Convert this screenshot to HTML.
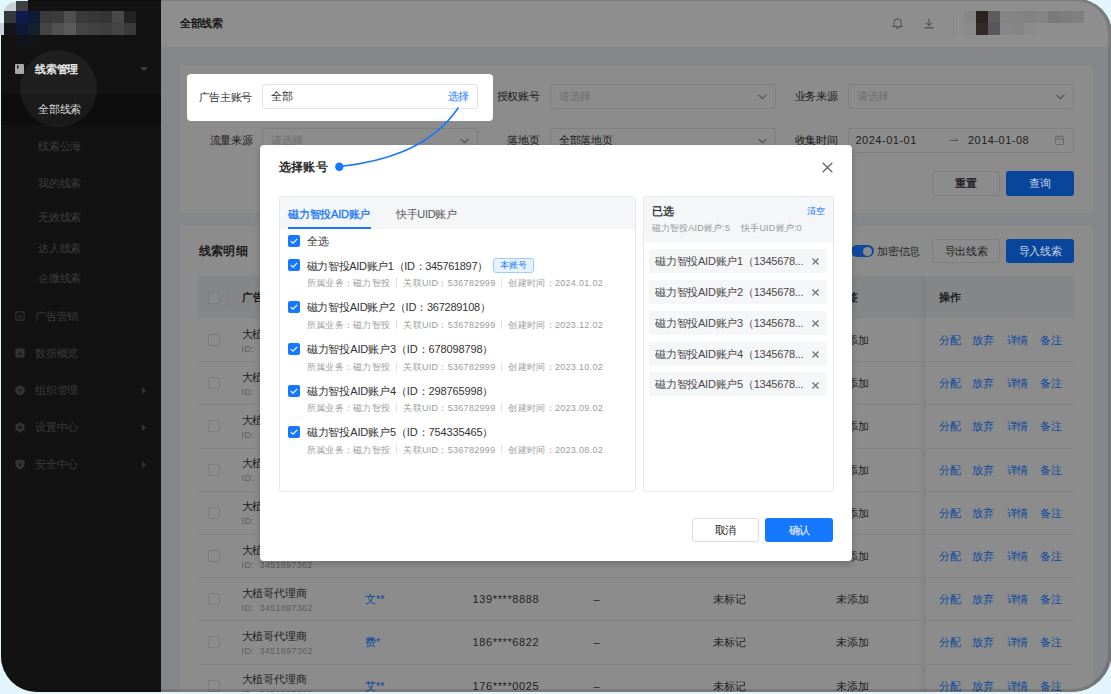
<!DOCTYPE html><html><head><meta charset="utf-8"><style>
html,body{margin:0;padding:0;width:1111px;height:694px;overflow:hidden;background:#e2f5fc;font-family:"Liberation Sans",sans-serif;}
.a{position:absolute;box-sizing:border-box}
.t{position:absolute;white-space:nowrap}
#frame{position:absolute;left:1px;top:-1px;width:1111px;height:692.5px;border-radius:36px 35px 40px 36px;overflow:hidden;background:#86878a}
#in{position:absolute;left:-1px;top:1px;width:1111px;height:694px}
#rim{position:absolute;left:1px;top:-1px;width:1111px;height:692.5px;border-radius:36px 35px 40px 36px;box-sizing:border-box;border:solid rgba(0,0,0,0.13);border-width:2px 4px 3px 1px}
svg{position:absolute;overflow:visible}
</style></head><body>
<div id="frame"><div id="in">
<div class="a" style="left:0px;top:0px;width:161px;height:700px;background:#121212"></div>
<div class="a" style="left:0px;top:94px;width:161px;height:31px;background:#0d0d0d"></div>
<div class="a" style="left:20px;top:49.5px;width:77px;height:77px;border-radius:50%;background:rgba(255,255,255,0.055)"></div>
<svg style="left:15px;top:64px" width="9" height="10" viewBox="0 0 9 10"><rect x="0" y="0" width="9" height="10" rx="1" fill="#a8a8a8"/><rect x="2" y="1.5" width="1.5" height="3" fill="#121212"/></svg>
<div class="t" style="left:35.3px;top:60.70px;font-size:11px;line-height:16px;color:#ececec;font-weight:400;letter-spacing:-0.3px;-webkit-text-stroke:0.4px #ececec;">线索管理</div>
<svg style="left:140px;top:67px" width="8" height="4" viewBox="0 0 8 4"><path d="M0 0H8L4 4Z" fill="#3a3a3a"/></svg>
<div class="t" style="left:38.4px;top:101.10px;font-size:11px;line-height:16px;color:#dcdcdc;font-weight:400;letter-spacing:-0.3px;">全部线索</div>
<div class="t" style="left:38.4px;top:137.70px;font-size:11px;line-height:16px;color:#3e3e3e;font-weight:400;letter-spacing:-0.3px;">线索公海</div>
<div class="t" style="left:38.4px;top:174.90px;font-size:11px;line-height:16px;color:#3e3e3e;font-weight:400;letter-spacing:-0.3px;">我的线索</div>
<div class="t" style="left:38.4px;top:208.70px;font-size:11px;line-height:16px;color:#3e3e3e;font-weight:400;letter-spacing:-0.3px;">无效线索</div>
<div class="t" style="left:38.4px;top:240.10px;font-size:11px;line-height:16px;color:#3e3e3e;font-weight:400;letter-spacing:-0.3px;">达人线索</div>
<div class="t" style="left:38.4px;top:270.00px;font-size:11px;line-height:16px;color:#3e3e3e;font-weight:400;letter-spacing:-0.3px;">企微线索</div>
<svg style="left:14.5px;top:310.9px" width="10" height="11" viewBox="0 0 10 11"><rect x="0.9" y="0.9" width="8.2" height="8.2" rx="1.2" fill="none" stroke="#333" stroke-width="1.1"/><path d="M3.4 7V5M5 7V3.5M6.6 7V5.5" stroke="#333" stroke-width="1"/></svg>
<div class="t" style="left:35.3px;top:307.80px;font-size:11px;line-height:16px;color:#3a3a3a;font-weight:400;letter-spacing:-0.3px;">广告营销</div>
<svg style="left:14.5px;top:348.0px" width="10" height="11" viewBox="0 0 10 11"><rect x="0.4" y="0.4" width="9.2" height="9.2" rx="1.2" fill="#333"/><path d="M3.4 7.2V5M5 7.2V3.5M6.6 7.2V5.5" stroke="#121212" stroke-width="1"/></svg>
<div class="t" style="left:35.3px;top:344.90px;font-size:11px;line-height:16px;color:#3a3a3a;font-weight:400;letter-spacing:-0.3px;">数据概览</div>
<svg style="left:14.5px;top:384.8px" width="10" height="11" viewBox="0 0 10 11"><path d="M5 0L9.6 2.6V7.9L5 10.5L0.4 7.9V2.6Z" fill="#333"/><path d="M3.2 3.6L5 5.3L6.8 3.6M5 5.3V7.6" stroke="#121212" stroke-width="1" fill="none"/></svg>
<div class="t" style="left:35.3px;top:381.70px;font-size:11px;line-height:16px;color:#3a3a3a;font-weight:400;letter-spacing:-0.3px;">组织管理</div>
<svg style="left:142px;top:386.5px" width="4" height="7" viewBox="0 0 4 7"><path d="M0 0L4 3.5L0 7Z" fill="#333"/></svg>
<svg style="left:14.5px;top:421.9px" width="10" height="11" viewBox="0 0 10 11"><circle cx="8.12" cy="7.10" r="1.7" fill="#333"/><circle cx="5.00" cy="8.90" r="1.7" fill="#333"/><circle cx="1.88" cy="7.10" r="1.7" fill="#333"/><circle cx="1.88" cy="3.50" r="1.7" fill="#333"/><circle cx="5.00" cy="1.70" r="1.7" fill="#333"/><circle cx="8.12" cy="3.50" r="1.7" fill="#333"/><circle cx="5" cy="5.3" r="3.8" fill="#333"/><circle cx="5" cy="5.3" r="1.6" fill="#121212"/></svg>
<div class="t" style="left:35.3px;top:418.80px;font-size:11px;line-height:16px;color:#3a3a3a;font-weight:400;letter-spacing:-0.3px;">设置中心</div>
<svg style="left:142px;top:423.6px" width="4" height="7" viewBox="0 0 4 7"><path d="M0 0L4 3.5L0 7Z" fill="#333"/></svg>
<svg style="left:14.5px;top:458.8px" width="10" height="11" viewBox="0 0 10 11"><path d="M5 0.3L9.6 1.8V5.6C9.6 8 7.2 9.6 5 10.6C2.8 9.6 0.4 8 0.4 5.6V1.8Z" fill="#333"/><path d="M5.5 3L4 5.6H6L4.7 7.8" stroke="#121212" stroke-width="0.8" fill="none"/></svg>
<div class="t" style="left:35.3px;top:455.70px;font-size:11px;line-height:16px;color:#3a3a3a;font-weight:400;letter-spacing:-0.3px;">安全中心</div>
<svg style="left:142px;top:460.5px" width="4" height="7" viewBox="0 0 4 7"><path d="M0 0L4 3.5L0 7Z" fill="#333"/></svg>
<div class="a" style="left:161px;top:0px;width:950px;height:47px;background:#8e8e8e"></div>
<div class="t" style="left:180.1px;top:14.70px;font-size:11px;line-height:16px;color:#141414;font-weight:400;letter-spacing:-0.3px;-webkit-text-stroke:0.4px #141414;">全部线索</div>
<svg style="left:892px;top:17px" width="11" height="12" viewBox="0 0 11 12"><path d="M2 8.5V5.5C2 3.3 3.5 2 5.5 2S9 3.3 9 5.5V8.5L10.2 9.6H0.8Z" fill="none" stroke="#555" stroke-width="1.1" stroke-linejoin="round"/><path d="M4.3 10.3A1.2 1.2 0 0 0 6.7 10.3" fill="none" stroke="#555" stroke-width="1.1"/><path d="M5.5 0.8V2" stroke="#555" stroke-width="1.1"/></svg>
<svg style="left:923.5px;top:17.5px" width="10" height="11" viewBox="0 0 10 11"><path d="M5 0.5V7.5M2 4.7L5 7.6L8 4.7" fill="none" stroke="#555" stroke-width="1.1"/><path d="M0.5 9.8H9.5" stroke="#555" stroke-width="1.4"/></svg>
<div class="a" style="left:953px;top:10px;width:1px;height:25px;background:#868686"></div>
<div class="a" style="left:964px;top:11px;width:12px;height:12px;background:#878787"></div>
<div class="a" style="left:976px;top:11px;width:12px;height:12px;background:#2a2220"></div>
<div class="a" style="left:988px;top:11px;width:12px;height:12px;background:#5e5d5b"></div>
<div class="a" style="left:1000px;top:11px;width:12px;height:12px;background:#848484"></div>
<div class="a" style="left:1012px;top:11px;width:12px;height:12px;background:#838383"></div>
<div class="a" style="left:1024px;top:11px;width:12px;height:12px;background:#828282"></div>
<div class="a" style="left:1036px;top:11px;width:12px;height:12px;background:#848484"></div>
<div class="a" style="left:1048px;top:11px;width:12px;height:12px;background:#7a7a7a"></div>
<div class="a" style="left:1060px;top:11px;width:12px;height:12px;background:#7d7d7d"></div>
<div class="a" style="left:1072px;top:11px;width:12px;height:12px;background:#7f7f7f"></div>
<div class="a" style="left:964px;top:23px;width:12px;height:12px;background:#8a8a8a"></div>
<div class="a" style="left:976px;top:23px;width:12px;height:12px;background:#332a28"></div>
<div class="a" style="left:988px;top:23px;width:12px;height:12px;background:#58585c"></div>
<div class="a" style="left:1000px;top:23px;width:12px;height:12px;background:#878787"></div>
<div class="a" style="left:1012px;top:23px;width:12px;height:12px;background:#858585"></div>
<div class="a" style="left:1024px;top:23px;width:12px;height:12px;background:#8b8b8b"></div>
<div class="a" style="left:180px;top:66px;width:913px;height:147px;background:#8c8c8c;border-radius:3px"></div>
<div class="t" style="right:571.5px;top:88.20px;font-size:11px;line-height:16px;color:#1a1a1a;font-weight:400;letter-spacing:-0.3px;">授权账号</div>
<div class="a" style="left:550px;top:84px;width:226px;height:24.5px;border:1px solid #7e7f81;border-radius:3px"></div>
<div class="t" style="left:559px;top:88.00px;font-size:11px;line-height:16px;color:#6e6e6e;font-weight:400;letter-spacing:-0.3px;">请选择</div>
<svg style="left:758.0px;top:93.5px" width="9" height="5.5" viewBox="0 0 9 5.5"><path d="M0.6 0.8L4.5 4.6L8.4 0.8" fill="none" stroke="#505050" stroke-width="1.15"/></svg>
<div class="t" style="right:273.5px;top:88.20px;font-size:11px;line-height:16px;color:#1a1a1a;font-weight:400;letter-spacing:-0.3px;">业务来源</div>
<div class="a" style="left:848px;top:84px;width:226px;height:24.5px;border:1px solid #7e7f81;border-radius:3px"></div>
<div class="t" style="left:857px;top:88.00px;font-size:11px;line-height:16px;color:#6e6e6e;font-weight:400;letter-spacing:-0.3px;">请选择</div>
<svg style="left:1056.0px;top:93.5px" width="9" height="5.5" viewBox="0 0 9 5.5"><path d="M0.6 0.8L4.5 4.6L8.4 0.8" fill="none" stroke="#505050" stroke-width="1.15"/></svg>
<div class="t" style="right:858.7px;top:131.70px;font-size:11px;line-height:16px;color:#1a1a1a;font-weight:400;letter-spacing:-0.3px;">流量来源</div>
<div class="a" style="left:262px;top:128px;width:216px;height:24.5px;border:1px solid #7e7f81;border-radius:3px"></div>
<div class="t" style="left:271px;top:132.00px;font-size:11px;line-height:16px;color:#6e6e6e;font-weight:400;letter-spacing:-0.3px;">请选择</div>
<svg style="left:460.0px;top:137.5px" width="9" height="5.5" viewBox="0 0 9 5.5"><path d="M0.6 0.8L4.5 4.6L8.4 0.8" fill="none" stroke="#505050" stroke-width="1.15"/></svg>
<div class="t" style="right:571.5px;top:131.70px;font-size:11px;line-height:16px;color:#1a1a1a;font-weight:400;letter-spacing:-0.3px;">落地页</div>
<div class="a" style="left:550px;top:128px;width:226px;height:24.5px;border:1px solid #7e7f81;border-radius:3px"></div>
<div class="t" style="left:559px;top:132.00px;font-size:11px;line-height:16px;color:#1e1e1e;font-weight:400;letter-spacing:-0.3px;">全部落地页</div>
<svg style="left:758.0px;top:137.5px" width="9" height="5.5" viewBox="0 0 9 5.5"><path d="M0.6 0.8L4.5 4.6L8.4 0.8" fill="none" stroke="#505050" stroke-width="1.15"/></svg>
<div class="t" style="right:273.5px;top:131.70px;font-size:11px;line-height:16px;color:#1a1a1a;font-weight:400;letter-spacing:-0.3px;">收集时间</div>
<div class="a" style="left:848px;top:128px;width:226px;height:24.5px;border:1px solid #7e7f81;border-radius:3px"></div>
<div class="t" style="left:855.5px;top:132.00px;font-size:11px;line-height:16px;color:#1e1e1e;font-weight:400;letter-spacing:0.5px;">2024-01-01</div>
<div class="t" style="left:967.9px;top:132.00px;font-size:11px;line-height:16px;color:#1e1e1e;font-weight:400;letter-spacing:0.5px;">2014-01-08</div>
<svg style="left:950px;top:138px" width="9" height="4" viewBox="0 0 9 4"><path d="M0 2.5H8M5.5 0.5L8 2.5" fill="none" stroke="#555" stroke-width="1"/></svg>
<svg style="left:1055px;top:135px" width="9" height="10" viewBox="0 0 9 10"><rect x="0.5" y="1.5" width="8" height="8" rx="1" fill="none" stroke="#666" stroke-width="0.9"/><path d="M0.5 4H8.5M2.7 0V2.5M6.3 0V2.5" stroke="#666" stroke-width="0.9"/></svg>
<div class="a" style="left:932px;top:171px;width:68px;height:24.5px;border:1px solid #7e7f81;border-radius:3px"></div>
<div class="t" style="left:966px;top:174.90px;font-size:11px;line-height:16px;color:#1a1a1a;font-weight:400;letter-spacing:-0.3px;-webkit-text-stroke:0.3px #1a1a1a;transform:translateX(-50%)">重置</div>
<div class="a" style="left:1006px;top:171px;width:68px;height:24.5px;background:#08459b;border-radius:3px"></div>
<div class="t" style="left:1040px;top:174.90px;font-size:11px;line-height:16px;color:#c8d4e4;font-weight:400;letter-spacing:-0.3px;transform:translateX(-50%)">查询</div>
<div class="a" style="left:180px;top:226px;width:913px;height:480px;background:#8c8c8c;border-radius:3px"></div>
<div class="t" style="left:198.9px;top:242.70px;font-size:12px;line-height:16px;color:#141414;font-weight:400;letter-spacing:0.3px;-webkit-text-stroke:0.4px #141414;">线索明细</div>
<div class="a" style="left:851px;top:245px;width:22.5px;height:12px;background:#0b4a9e;border-radius:6px"></div>
<div class="a" style="left:863px;top:246.5px;width:9px;height:9px;border-radius:50%;background:#8c8c8c"></div>
<div class="t" style="left:877.4px;top:242.70px;font-size:11px;line-height:16px;color:#2a2a2a;font-weight:400;letter-spacing:-0.3px;">加密信息</div>
<div class="a" style="left:932px;top:239px;width:68px;height:24px;border:1px solid #7e7f81;border-radius:3px"></div>
<div class="t" style="left:966px;top:242.70px;font-size:11px;line-height:16px;color:#222;font-weight:400;letter-spacing:-0.3px;transform:translateX(-50%)">导出线索</div>
<div class="a" style="left:1006px;top:239px;width:68px;height:24px;background:#08459b;border-radius:3px"></div>
<div class="t" style="left:1040px;top:242.70px;font-size:11px;line-height:16px;color:#c8d4e4;font-weight:400;letter-spacing:-0.3px;transform:translateX(-50%)">导入线索</div>
<div class="a" style="left:198px;top:276px;width:876px;height:42px;background:#858688"></div>
<div class="a" style="left:228px;top:287px;width:1px;height:20px;background:#7d7e80"></div>
<div class="a" style="left:208px;top:291.5px;width:12px;height:12px;border:1px solid #7b7c7e;border-radius:2px;background:#8a8a8a"></div>
<div class="t" style="left:241.9px;top:289.20px;font-size:11px;line-height:16px;color:#111;font-weight:400;letter-spacing:-0.3px;-webkit-text-stroke:0.3px #111;">广告主</div>
<div class="t" style="left:836.3px;top:289.20px;font-size:11px;line-height:16px;color:#111;font-weight:400;letter-spacing:-0.3px;-webkit-text-stroke:0.3px #111;">标签</div>
<div class="t" style="left:939px;top:289.20px;font-size:11px;line-height:16px;color:#111;font-weight:400;letter-spacing:-0.3px;-webkit-text-stroke:0.3px #111;">操作</div>
<div class="a" style="left:918px;top:276px;width:7px;height:430px;background:linear-gradient(to right,rgba(0,0,0,0),rgba(0,0,0,0.05))"></div>
<div class="a" style="left:925px;top:276px;width:1px;height:430px;background:#818283"></div>
<div class="a" style="left:198px;top:361px;width:876px;height:1px;background:#828385"></div>
<div class="a" style="left:208px;top:334.0px;width:12px;height:12px;border:1px solid #7b7c7e;border-radius:2px"></div>
<div class="t" style="left:241.6px;top:325.50px;font-size:11px;line-height:16px;color:#1e1e1e;font-weight:400;letter-spacing:-0.16px;">大植哥代理商</div>
<div class="t" style="left:241.6px;top:340.50px;font-size:9px;line-height:16px;color:#5e5e5e;font-weight:400;letter-spacing:0.3px;">ID:<span style="display:inline-block;width:5.5px"></span>3451897362</div>
<div class="t" style="left:365px;top:332.00px;font-size:11px;line-height:16px;color:#0b4a9e;font-weight:400;letter-spacing:0px;">文**</div>
<div class="t" style="left:472.6px;top:332.00px;font-size:11px;line-height:16px;color:#1e1e1e;font-weight:400;letter-spacing:0.6px;">139****8888</div>
<div class="t" style="left:593.5px;top:332.00px;font-size:11px;line-height:16px;color:#1e1e1e;font-weight:400;letter-spacing:0px;">–</div>
<div class="t" style="left:713.2px;top:332.00px;font-size:11px;line-height:16px;color:#1e1e1e;font-weight:400;letter-spacing:-0.3px;">未标记</div>
<div class="t" style="left:836.3px;top:332.00px;font-size:11px;line-height:16px;color:#1e1e1e;font-weight:400;letter-spacing:-0.3px;">未添加</div>
<div class="t" style="left:938.9px;top:332.00px;font-size:11px;line-height:16px;color:#0b4a9e;font-weight:400;letter-spacing:-0.3px;">分配</div>
<div class="t" style="left:972.2px;top:332.00px;font-size:11px;line-height:16px;color:#0b4a9e;font-weight:400;letter-spacing:-0.3px;">放弃</div>
<div class="t" style="left:1006.7px;top:332.00px;font-size:11px;line-height:16px;color:#0b4a9e;font-weight:400;letter-spacing:-0.3px;">详情</div>
<div class="t" style="left:1040.4px;top:332.00px;font-size:11px;line-height:16px;color:#0b4a9e;font-weight:400;letter-spacing:-0.3px;">备注</div>
<div class="a" style="left:198px;top:404px;width:876px;height:1px;background:#828385"></div>
<div class="a" style="left:208px;top:377.2px;width:12px;height:12px;border:1px solid #7b7c7e;border-radius:2px"></div>
<div class="t" style="left:241.6px;top:368.70px;font-size:11px;line-height:16px;color:#1e1e1e;font-weight:400;letter-spacing:-0.16px;">大植哥代理商</div>
<div class="t" style="left:241.6px;top:383.70px;font-size:9px;line-height:16px;color:#5e5e5e;font-weight:400;letter-spacing:0.3px;">ID:<span style="display:inline-block;width:5.5px"></span>3451897362</div>
<div class="t" style="left:365px;top:375.20px;font-size:11px;line-height:16px;color:#0b4a9e;font-weight:400;letter-spacing:0px;">文**</div>
<div class="t" style="left:472.6px;top:375.20px;font-size:11px;line-height:16px;color:#1e1e1e;font-weight:400;letter-spacing:0.6px;">186****6822</div>
<div class="t" style="left:593.5px;top:375.20px;font-size:11px;line-height:16px;color:#1e1e1e;font-weight:400;letter-spacing:0px;">–</div>
<div class="t" style="left:713.2px;top:375.20px;font-size:11px;line-height:16px;color:#1e1e1e;font-weight:400;letter-spacing:-0.3px;">未标记</div>
<div class="t" style="left:836.3px;top:375.20px;font-size:11px;line-height:16px;color:#1e1e1e;font-weight:400;letter-spacing:-0.3px;">未添加</div>
<div class="t" style="left:938.9px;top:375.20px;font-size:11px;line-height:16px;color:#0b4a9e;font-weight:400;letter-spacing:-0.3px;">分配</div>
<div class="t" style="left:972.2px;top:375.20px;font-size:11px;line-height:16px;color:#0b4a9e;font-weight:400;letter-spacing:-0.3px;">放弃</div>
<div class="t" style="left:1006.7px;top:375.20px;font-size:11px;line-height:16px;color:#0b4a9e;font-weight:400;letter-spacing:-0.3px;">详情</div>
<div class="t" style="left:1040.4px;top:375.20px;font-size:11px;line-height:16px;color:#0b4a9e;font-weight:400;letter-spacing:-0.3px;">备注</div>
<div class="a" style="left:198px;top:448px;width:876px;height:1px;background:#828385"></div>
<div class="a" style="left:208px;top:420.4px;width:12px;height:12px;border:1px solid #7b7c7e;border-radius:2px"></div>
<div class="t" style="left:241.6px;top:411.90px;font-size:11px;line-height:16px;color:#1e1e1e;font-weight:400;letter-spacing:-0.16px;">大植哥代理商</div>
<div class="t" style="left:241.6px;top:426.90px;font-size:9px;line-height:16px;color:#5e5e5e;font-weight:400;letter-spacing:0.3px;">ID:<span style="display:inline-block;width:5.5px"></span>3451897362</div>
<div class="t" style="left:365px;top:418.40px;font-size:11px;line-height:16px;color:#0b4a9e;font-weight:400;letter-spacing:0px;">费*</div>
<div class="t" style="left:472.6px;top:418.40px;font-size:11px;line-height:16px;color:#1e1e1e;font-weight:400;letter-spacing:0.6px;">176****0025</div>
<div class="t" style="left:593.5px;top:418.40px;font-size:11px;line-height:16px;color:#1e1e1e;font-weight:400;letter-spacing:0px;">–</div>
<div class="t" style="left:713.2px;top:418.40px;font-size:11px;line-height:16px;color:#1e1e1e;font-weight:400;letter-spacing:-0.3px;">未标记</div>
<div class="t" style="left:836.3px;top:418.40px;font-size:11px;line-height:16px;color:#1e1e1e;font-weight:400;letter-spacing:-0.3px;">未添加</div>
<div class="t" style="left:938.9px;top:418.40px;font-size:11px;line-height:16px;color:#0b4a9e;font-weight:400;letter-spacing:-0.3px;">分配</div>
<div class="t" style="left:972.2px;top:418.40px;font-size:11px;line-height:16px;color:#0b4a9e;font-weight:400;letter-spacing:-0.3px;">放弃</div>
<div class="t" style="left:1006.7px;top:418.40px;font-size:11px;line-height:16px;color:#0b4a9e;font-weight:400;letter-spacing:-0.3px;">详情</div>
<div class="t" style="left:1040.4px;top:418.40px;font-size:11px;line-height:16px;color:#0b4a9e;font-weight:400;letter-spacing:-0.3px;">备注</div>
<div class="a" style="left:198px;top:491px;width:876px;height:1px;background:#828385"></div>
<div class="a" style="left:208px;top:463.6px;width:12px;height:12px;border:1px solid #7b7c7e;border-radius:2px"></div>
<div class="t" style="left:241.6px;top:455.10px;font-size:11px;line-height:16px;color:#1e1e1e;font-weight:400;letter-spacing:-0.16px;">大植哥代理商</div>
<div class="t" style="left:241.6px;top:470.10px;font-size:9px;line-height:16px;color:#5e5e5e;font-weight:400;letter-spacing:0.3px;">ID:<span style="display:inline-block;width:5.5px"></span>3451897362</div>
<div class="t" style="left:365px;top:461.60px;font-size:11px;line-height:16px;color:#0b4a9e;font-weight:400;letter-spacing:0px;">艾**</div>
<div class="t" style="left:472.6px;top:461.60px;font-size:11px;line-height:16px;color:#1e1e1e;font-weight:400;letter-spacing:0.6px;">139****8888</div>
<div class="t" style="left:593.5px;top:461.60px;font-size:11px;line-height:16px;color:#1e1e1e;font-weight:400;letter-spacing:0px;">–</div>
<div class="t" style="left:713.2px;top:461.60px;font-size:11px;line-height:16px;color:#1e1e1e;font-weight:400;letter-spacing:-0.3px;">未标记</div>
<div class="t" style="left:836.3px;top:461.60px;font-size:11px;line-height:16px;color:#1e1e1e;font-weight:400;letter-spacing:-0.3px;">未添加</div>
<div class="t" style="left:938.9px;top:461.60px;font-size:11px;line-height:16px;color:#0b4a9e;font-weight:400;letter-spacing:-0.3px;">分配</div>
<div class="t" style="left:972.2px;top:461.60px;font-size:11px;line-height:16px;color:#0b4a9e;font-weight:400;letter-spacing:-0.3px;">放弃</div>
<div class="t" style="left:1006.7px;top:461.60px;font-size:11px;line-height:16px;color:#0b4a9e;font-weight:400;letter-spacing:-0.3px;">详情</div>
<div class="t" style="left:1040.4px;top:461.60px;font-size:11px;line-height:16px;color:#0b4a9e;font-weight:400;letter-spacing:-0.3px;">备注</div>
<div class="a" style="left:198px;top:534px;width:876px;height:1px;background:#828385"></div>
<div class="a" style="left:208px;top:506.8px;width:12px;height:12px;border:1px solid #7b7c7e;border-radius:2px"></div>
<div class="t" style="left:241.6px;top:498.30px;font-size:11px;line-height:16px;color:#1e1e1e;font-weight:400;letter-spacing:-0.16px;">大植哥代理商</div>
<div class="t" style="left:241.6px;top:513.30px;font-size:9px;line-height:16px;color:#5e5e5e;font-weight:400;letter-spacing:0.3px;">ID:<span style="display:inline-block;width:5.5px"></span>3451897362</div>
<div class="t" style="left:365px;top:504.80px;font-size:11px;line-height:16px;color:#0b4a9e;font-weight:400;letter-spacing:0px;">文**</div>
<div class="t" style="left:472.6px;top:504.80px;font-size:11px;line-height:16px;color:#1e1e1e;font-weight:400;letter-spacing:0.6px;">186****6822</div>
<div class="t" style="left:593.5px;top:504.80px;font-size:11px;line-height:16px;color:#1e1e1e;font-weight:400;letter-spacing:0px;">–</div>
<div class="t" style="left:713.2px;top:504.80px;font-size:11px;line-height:16px;color:#1e1e1e;font-weight:400;letter-spacing:-0.3px;">未标记</div>
<div class="t" style="left:836.3px;top:504.80px;font-size:11px;line-height:16px;color:#1e1e1e;font-weight:400;letter-spacing:-0.3px;">未添加</div>
<div class="t" style="left:938.9px;top:504.80px;font-size:11px;line-height:16px;color:#0b4a9e;font-weight:400;letter-spacing:-0.3px;">分配</div>
<div class="t" style="left:972.2px;top:504.80px;font-size:11px;line-height:16px;color:#0b4a9e;font-weight:400;letter-spacing:-0.3px;">放弃</div>
<div class="t" style="left:1006.7px;top:504.80px;font-size:11px;line-height:16px;color:#0b4a9e;font-weight:400;letter-spacing:-0.3px;">详情</div>
<div class="t" style="left:1040.4px;top:504.80px;font-size:11px;line-height:16px;color:#0b4a9e;font-weight:400;letter-spacing:-0.3px;">备注</div>
<div class="a" style="left:198px;top:577px;width:876px;height:1px;background:#828385"></div>
<div class="a" style="left:208px;top:550.0px;width:12px;height:12px;border:1px solid #7b7c7e;border-radius:2px"></div>
<div class="t" style="left:241.6px;top:541.50px;font-size:11px;line-height:16px;color:#1e1e1e;font-weight:400;letter-spacing:-0.16px;">大植哥代理商</div>
<div class="t" style="left:241.6px;top:556.50px;font-size:9px;line-height:16px;color:#5e5e5e;font-weight:400;letter-spacing:0.3px;">ID:<span style="display:inline-block;width:5.5px"></span>3451897362</div>
<div class="t" style="left:836.3px;top:548.00px;font-size:11px;line-height:16px;color:#1e1e1e;font-weight:400;letter-spacing:-0.3px;">未添加</div>
<div class="t" style="left:938.9px;top:548.00px;font-size:11px;line-height:16px;color:#0b4a9e;font-weight:400;letter-spacing:-0.3px;">分配</div>
<div class="t" style="left:972.2px;top:548.00px;font-size:11px;line-height:16px;color:#0b4a9e;font-weight:400;letter-spacing:-0.3px;">放弃</div>
<div class="t" style="left:1006.7px;top:548.00px;font-size:11px;line-height:16px;color:#0b4a9e;font-weight:400;letter-spacing:-0.3px;">详情</div>
<div class="t" style="left:1040.4px;top:548.00px;font-size:11px;line-height:16px;color:#0b4a9e;font-weight:400;letter-spacing:-0.3px;">备注</div>
<div class="a" style="left:198px;top:620px;width:876px;height:1px;background:#828385"></div>
<div class="a" style="left:208px;top:593.2px;width:12px;height:12px;border:1px solid #7b7c7e;border-radius:2px"></div>
<div class="t" style="left:241.6px;top:584.70px;font-size:11px;line-height:16px;color:#1e1e1e;font-weight:400;letter-spacing:-0.16px;">大植哥代理商</div>
<div class="t" style="left:241.6px;top:599.70px;font-size:9px;line-height:16px;color:#5e5e5e;font-weight:400;letter-spacing:0.3px;">ID:<span style="display:inline-block;width:5.5px"></span>3451897362</div>
<div class="t" style="left:365px;top:591.20px;font-size:11px;line-height:16px;color:#0b4a9e;font-weight:400;letter-spacing:0px;">文**</div>
<div class="t" style="left:472.6px;top:591.20px;font-size:11px;line-height:16px;color:#1e1e1e;font-weight:400;letter-spacing:0.6px;">139****8888</div>
<div class="t" style="left:593.5px;top:591.20px;font-size:11px;line-height:16px;color:#1e1e1e;font-weight:400;letter-spacing:0px;">–</div>
<div class="t" style="left:713.2px;top:591.20px;font-size:11px;line-height:16px;color:#1e1e1e;font-weight:400;letter-spacing:-0.3px;">未标记</div>
<div class="t" style="left:836.3px;top:591.20px;font-size:11px;line-height:16px;color:#1e1e1e;font-weight:400;letter-spacing:-0.3px;">未添加</div>
<div class="t" style="left:938.9px;top:591.20px;font-size:11px;line-height:16px;color:#0b4a9e;font-weight:400;letter-spacing:-0.3px;">分配</div>
<div class="t" style="left:972.2px;top:591.20px;font-size:11px;line-height:16px;color:#0b4a9e;font-weight:400;letter-spacing:-0.3px;">放弃</div>
<div class="t" style="left:1006.7px;top:591.20px;font-size:11px;line-height:16px;color:#0b4a9e;font-weight:400;letter-spacing:-0.3px;">详情</div>
<div class="t" style="left:1040.4px;top:591.20px;font-size:11px;line-height:16px;color:#0b4a9e;font-weight:400;letter-spacing:-0.3px;">备注</div>
<div class="a" style="left:198px;top:664px;width:876px;height:1px;background:#828385"></div>
<div class="a" style="left:208px;top:636.4px;width:12px;height:12px;border:1px solid #7b7c7e;border-radius:2px"></div>
<div class="t" style="left:241.6px;top:627.90px;font-size:11px;line-height:16px;color:#1e1e1e;font-weight:400;letter-spacing:-0.16px;">大植哥代理商</div>
<div class="t" style="left:241.6px;top:642.90px;font-size:9px;line-height:16px;color:#5e5e5e;font-weight:400;letter-spacing:0.3px;">ID:<span style="display:inline-block;width:5.5px"></span>3451897362</div>
<div class="t" style="left:365px;top:634.40px;font-size:11px;line-height:16px;color:#0b4a9e;font-weight:400;letter-spacing:0px;">费*</div>
<div class="t" style="left:472.6px;top:634.40px;font-size:11px;line-height:16px;color:#1e1e1e;font-weight:400;letter-spacing:0.6px;">186****6822</div>
<div class="t" style="left:593.5px;top:634.40px;font-size:11px;line-height:16px;color:#1e1e1e;font-weight:400;letter-spacing:0px;">–</div>
<div class="t" style="left:713.2px;top:634.40px;font-size:11px;line-height:16px;color:#1e1e1e;font-weight:400;letter-spacing:-0.3px;">未标记</div>
<div class="t" style="left:836.3px;top:634.40px;font-size:11px;line-height:16px;color:#1e1e1e;font-weight:400;letter-spacing:-0.3px;">未添加</div>
<div class="t" style="left:938.9px;top:634.40px;font-size:11px;line-height:16px;color:#0b4a9e;font-weight:400;letter-spacing:-0.3px;">分配</div>
<div class="t" style="left:972.2px;top:634.40px;font-size:11px;line-height:16px;color:#0b4a9e;font-weight:400;letter-spacing:-0.3px;">放弃</div>
<div class="t" style="left:1006.7px;top:634.40px;font-size:11px;line-height:16px;color:#0b4a9e;font-weight:400;letter-spacing:-0.3px;">详情</div>
<div class="t" style="left:1040.4px;top:634.40px;font-size:11px;line-height:16px;color:#0b4a9e;font-weight:400;letter-spacing:-0.3px;">备注</div>
<div class="a" style="left:198px;top:707px;width:876px;height:1px;background:#828385"></div>
<div class="a" style="left:208px;top:679.6px;width:12px;height:12px;border:1px solid #7b7c7e;border-radius:2px"></div>
<div class="t" style="left:241.6px;top:671.10px;font-size:11px;line-height:16px;color:#1e1e1e;font-weight:400;letter-spacing:-0.16px;">大植哥代理商</div>
<div class="t" style="left:241.6px;top:686.10px;font-size:9px;line-height:16px;color:#5e5e5e;font-weight:400;letter-spacing:0.3px;">ID:<span style="display:inline-block;width:5.5px"></span>3451897362</div>
<div class="t" style="left:365px;top:677.60px;font-size:11px;line-height:16px;color:#0b4a9e;font-weight:400;letter-spacing:0px;">艾**</div>
<div class="t" style="left:472.6px;top:677.60px;font-size:11px;line-height:16px;color:#1e1e1e;font-weight:400;letter-spacing:0.6px;">176****0025</div>
<div class="t" style="left:593.5px;top:677.60px;font-size:11px;line-height:16px;color:#1e1e1e;font-weight:400;letter-spacing:0px;">–</div>
<div class="t" style="left:713.2px;top:677.60px;font-size:11px;line-height:16px;color:#1e1e1e;font-weight:400;letter-spacing:-0.3px;">未标记</div>
<div class="t" style="left:836.3px;top:677.60px;font-size:11px;line-height:16px;color:#1e1e1e;font-weight:400;letter-spacing:-0.3px;">未添加</div>
<div class="t" style="left:938.9px;top:677.60px;font-size:11px;line-height:16px;color:#0b4a9e;font-weight:400;letter-spacing:-0.3px;">分配</div>
<div class="t" style="left:972.2px;top:677.60px;font-size:11px;line-height:16px;color:#0b4a9e;font-weight:400;letter-spacing:-0.3px;">放弃</div>
<div class="t" style="left:1006.7px;top:677.60px;font-size:11px;line-height:16px;color:#0b4a9e;font-weight:400;letter-spacing:-0.3px;">详情</div>
<div class="t" style="left:1040.4px;top:677.60px;font-size:11px;line-height:16px;color:#0b4a9e;font-weight:400;letter-spacing:-0.3px;">备注</div>
<div class="a" style="left:187.3px;top:73.5px;width:305.5px;height:47.3px;background:#fff;border-radius:4px"></div>
<div class="t" style="left:198.6px;top:88.90px;font-size:11px;line-height:16px;color:#333;font-weight:400;letter-spacing:-0.3px;">广告主账号</div>
<div class="a" style="left:262px;top:84.4px;width:216px;height:24.4px;border:1px solid #e3e3e3;border-radius:3px;background:#fff"></div>
<div class="t" style="left:271.2px;top:88.40px;font-size:11px;line-height:16px;color:#333;font-weight:400;letter-spacing:-0.3px;">全部</div>
<div class="t" style="left:447.7px;top:88.40px;font-size:11px;line-height:16px;color:#1677ff;font-weight:400;letter-spacing:-0.3px;">选择</div>
<div class="a" style="left:260px;top:144.5px;width:592px;height:416px;background:#fff;border-radius:4px;box-shadow:0 3px 7px rgba(0,0,0,0.2)"></div>
<div class="t" style="left:278.9px;top:158.90px;font-size:12px;line-height:16px;color:#111;font-weight:400;letter-spacing:0.3px;-webkit-text-stroke:0.4px #111;">选择账号</div>
<svg style="left:821.5px;top:161.5px" width="11" height="11" viewBox="0 0 11 11"><path d="M0.7 0.7L10.3 10.3M10.3 0.7L0.7 10.3" stroke="#666" stroke-width="1.3"/></svg>
<div class="a" style="left:279px;top:196px;width:356.5px;height:295.5px;border:1px solid #e6e7ea;border-radius:3px;background:#fff"></div>
<div class="a" style="left:280px;top:197px;width:354.5px;height:31.5px;background:#f5f6f8;border-radius:2px 2px 0 0"></div>
<div class="t" style="left:288px;top:205.70px;font-size:11px;line-height:16px;color:#1677ff;font-weight:400;letter-spacing:-0.23px;-webkit-text-stroke:0.3px #1677ff;">磁力智投AID账户</div>
<div class="a" style="left:288px;top:226.6px;width:82.5px;height:2px;background:#1677ff"></div>
<div class="t" style="left:396px;top:205.70px;font-size:11px;line-height:16px;color:#555;font-weight:400;letter-spacing:-0.34px;">快手UID账户</div>
<svg style="left:288px;top:235px" width="12" height="12" viewBox="0 0 12 12"><rect x="0" y="0" width="12" height="12" rx="2" fill="#1677ff"/><path d="M2.8 6.1L5 8.1L9.2 3.9" fill="none" stroke="#fff" stroke-width="1.2"/></svg>
<div class="t" style="left:307px;top:232.70px;font-size:11px;line-height:16px;color:#333;font-weight:400;letter-spacing:-0.3px;">全选</div>
<svg style="left:288px;top:259.4px" width="12" height="12" viewBox="0 0 12 12"><rect x="0" y="0" width="12" height="12" rx="2" fill="#1677ff"/><path d="M2.8 6.1L5 8.1L9.2 3.9" fill="none" stroke="#fff" stroke-width="1.2"/></svg>
<div class="t" style="left:306.7px;top:257.60px;font-size:11px;line-height:16px;color:#333;font-weight:400;letter-spacing:-0.35px;">磁力智投AID账户1（ID：345761897）</div>
<div class="t" style="left:306.7px;top:275.30px;font-size:9px;line-height:16px;color:#9c9c9c;font-weight:400;letter-spacing:0.3px;">所属业务：磁力智投<span style="display:inline-block;width:1px;height:9px;background:#e2e2e2;margin:0 6px;vertical-align:-1px"></span>关联UID：536782999<span style="display:inline-block;width:1px;height:9px;background:#e2e2e2;margin:0 6px;vertical-align:-1px"></span>创建时间：2024.01.02</div>
<svg style="left:288px;top:301.1px" width="12" height="12" viewBox="0 0 12 12"><rect x="0" y="0" width="12" height="12" rx="2" fill="#1677ff"/><path d="M2.8 6.1L5 8.1L9.2 3.9" fill="none" stroke="#fff" stroke-width="1.2"/></svg>
<div class="t" style="left:306.7px;top:299.30px;font-size:11px;line-height:16px;color:#333;font-weight:400;letter-spacing:-0.23px;">磁力智投AID账户2（ID：367289108）</div>
<div class="t" style="left:306.7px;top:317.00px;font-size:9px;line-height:16px;color:#9c9c9c;font-weight:400;letter-spacing:0.3px;">所属业务：磁力智投<span style="display:inline-block;width:1px;height:9px;background:#e2e2e2;margin:0 6px;vertical-align:-1px"></span>关联UID：536782999<span style="display:inline-block;width:1px;height:9px;background:#e2e2e2;margin:0 6px;vertical-align:-1px"></span>创建时间：2023.12.02</div>
<svg style="left:288px;top:342.8px" width="12" height="12" viewBox="0 0 12 12"><rect x="0" y="0" width="12" height="12" rx="2" fill="#1677ff"/><path d="M2.8 6.1L5 8.1L9.2 3.9" fill="none" stroke="#fff" stroke-width="1.2"/></svg>
<div class="t" style="left:306.7px;top:341.00px;font-size:11px;line-height:16px;color:#333;font-weight:400;letter-spacing:-0.12px;">磁力智投AID账户3（ID：678098798）</div>
<div class="t" style="left:306.7px;top:358.70px;font-size:9px;line-height:16px;color:#9c9c9c;font-weight:400;letter-spacing:0.3px;">所属业务：磁力智投<span style="display:inline-block;width:1px;height:9px;background:#e2e2e2;margin:0 6px;vertical-align:-1px"></span>关联UID：536782999<span style="display:inline-block;width:1px;height:9px;background:#e2e2e2;margin:0 6px;vertical-align:-1px"></span>创建时间：2023.10.02</div>
<svg style="left:288px;top:384.5px" width="12" height="12" viewBox="0 0 12 12"><rect x="0" y="0" width="12" height="12" rx="2" fill="#1677ff"/><path d="M2.8 6.1L5 8.1L9.2 3.9" fill="none" stroke="#fff" stroke-width="1.2"/></svg>
<div class="t" style="left:306.7px;top:382.70px;font-size:11px;line-height:16px;color:#333;font-weight:400;letter-spacing:-0.12px;">磁力智投AID账户4（ID：298765998）</div>
<div class="t" style="left:306.7px;top:400.40px;font-size:9px;line-height:16px;color:#9c9c9c;font-weight:400;letter-spacing:0.3px;">所属业务：磁力智投<span style="display:inline-block;width:1px;height:9px;background:#e2e2e2;margin:0 6px;vertical-align:-1px"></span>关联UID：536782999<span style="display:inline-block;width:1px;height:9px;background:#e2e2e2;margin:0 6px;vertical-align:-1px"></span>创建时间：2023.09.02</div>
<svg style="left:288px;top:426.2px" width="12" height="12" viewBox="0 0 12 12"><rect x="0" y="0" width="12" height="12" rx="2" fill="#1677ff"/><path d="M2.8 6.1L5 8.1L9.2 3.9" fill="none" stroke="#fff" stroke-width="1.2"/></svg>
<div class="t" style="left:306.7px;top:424.40px;font-size:11px;line-height:16px;color:#333;font-weight:400;letter-spacing:-0.12px;">磁力智投AID账户5（ID：754335465）</div>
<div class="t" style="left:306.7px;top:442.10px;font-size:9px;line-height:16px;color:#9c9c9c;font-weight:400;letter-spacing:0.3px;">所属业务：磁力智投<span style="display:inline-block;width:1px;height:9px;background:#e2e2e2;margin:0 6px;vertical-align:-1px"></span>关联UID：536782999<span style="display:inline-block;width:1px;height:9px;background:#e2e2e2;margin:0 6px;vertical-align:-1px"></span>创建时间：2023.08.02</div>
<div class="a" style="left:493.4px;top:258.2px;width:40.4px;height:14.8px;background:#e8f3ff;border:1px solid #9ccbff;border-radius:3px"></div>
<div class="t" style="left:513.6px;top:257.30px;font-size:9px;line-height:16px;color:#1677ff;font-weight:400;letter-spacing:0px;transform:translateX(-50%)">本账号</div>
<div class="a" style="left:642.5px;top:196px;width:191px;height:295.5px;border:1px solid #e6e7ea;border-radius:3px;background:#fff"></div>
<div class="a" style="left:643.5px;top:197px;width:189px;height:45px;background:#f5f6f8;border-radius:2px 2px 0 0"></div>
<div class="t" style="left:652.4px;top:202.90px;font-size:11px;line-height:16px;color:#222;font-weight:400;letter-spacing:-0.3px;-webkit-text-stroke:0.3px #222;">已选</div>
<div class="t" style="left:806.5px;top:202.70px;font-size:9px;line-height:16px;color:#1677ff;font-weight:400;letter-spacing:0px;">清空</div>
<div class="t" style="left:651.5px;top:220.00px;font-size:9px;line-height:16px;color:#999;font-weight:400;letter-spacing:0.2px;">磁力智投AID账户:5&nbsp;&nbsp;&nbsp;&nbsp;快手UID账户:0</div>
<div class="a" style="left:648.8px;top:248.8px;width:178.3px;height:24px;background:#f5f6f8;border-radius:3px"></div>
<div class="t" style="left:655px;top:252.80px;font-size:11px;line-height:16px;color:#4a4a4a;font-weight:400;letter-spacing:-0.25px;">磁力智投AID账户1（1345678...</div>
<svg style="left:812.3px;top:257.9px" width="7" height="7" viewBox="0 0 7 7"><path d="M0.5 0.5L6.5 6.5M6.5 0.5L0.5 6.5" stroke="#6a6a6a" stroke-width="1.1"/></svg>
<div class="a" style="left:648.8px;top:279.7px;width:178.3px;height:24px;background:#f5f6f8;border-radius:3px"></div>
<div class="t" style="left:655px;top:283.70px;font-size:11px;line-height:16px;color:#4a4a4a;font-weight:400;letter-spacing:-0.25px;">磁力智投AID账户2（1345678...</div>
<svg style="left:812.3px;top:288.8px" width="7" height="7" viewBox="0 0 7 7"><path d="M0.5 0.5L6.5 6.5M6.5 0.5L0.5 6.5" stroke="#6a6a6a" stroke-width="1.1"/></svg>
<div class="a" style="left:648.8px;top:310.6px;width:178.3px;height:24px;background:#f5f6f8;border-radius:3px"></div>
<div class="t" style="left:655px;top:314.60px;font-size:11px;line-height:16px;color:#4a4a4a;font-weight:400;letter-spacing:-0.25px;">磁力智投AID账户3（1345678...</div>
<svg style="left:812.3px;top:319.7px" width="7" height="7" viewBox="0 0 7 7"><path d="M0.5 0.5L6.5 6.5M6.5 0.5L0.5 6.5" stroke="#6a6a6a" stroke-width="1.1"/></svg>
<div class="a" style="left:648.8px;top:341.5px;width:178.3px;height:24px;background:#f5f6f8;border-radius:3px"></div>
<div class="t" style="left:655px;top:345.50px;font-size:11px;line-height:16px;color:#4a4a4a;font-weight:400;letter-spacing:-0.25px;">磁力智投AID账户4（1345678...</div>
<svg style="left:812.3px;top:350.6px" width="7" height="7" viewBox="0 0 7 7"><path d="M0.5 0.5L6.5 6.5M6.5 0.5L0.5 6.5" stroke="#6a6a6a" stroke-width="1.1"/></svg>
<div class="a" style="left:648.8px;top:372.4px;width:178.3px;height:24px;background:#f5f6f8;border-radius:3px"></div>
<div class="t" style="left:655px;top:376.40px;font-size:11px;line-height:16px;color:#4a4a4a;font-weight:400;letter-spacing:-0.25px;">磁力智投AID账户5（1345678...</div>
<svg style="left:812.3px;top:381.5px" width="7" height="7" viewBox="0 0 7 7"><path d="M0.5 0.5L6.5 6.5M6.5 0.5L0.5 6.5" stroke="#6a6a6a" stroke-width="1.1"/></svg>
<div class="a" style="left:691.5px;top:518px;width:67.7px;height:24px;border:1px solid #dcdcdc;border-radius:3px;background:#fff"></div>
<div class="t" style="left:725.3px;top:521.90px;font-size:11px;line-height:16px;color:#222;font-weight:400;letter-spacing:-0.3px;transform:translateX(-50%)">取消</div>
<div class="a" style="left:765.4px;top:518px;width:67.7px;height:24px;background:#1677ff;border-radius:3px"></div>
<div class="t" style="left:799.3px;top:521.90px;font-size:11px;line-height:16px;color:#fff;font-weight:400;letter-spacing:-0.3px;transform:translateX(-50%)">确认</div>
<svg style="left:0;top:0" width="1111" height="694" viewBox="0 0 1111 694"><path d="M340 166.6C380 162 430 150 458.5 107.5" fill="none" stroke="#1677ff" stroke-width="1.5"/><circle cx="339.3" cy="166.7" r="4.2" fill="#1677ff"/></svg>
</div></div><div id="rim"></div><div class="a" style="left:0;top:0;width:4px;height:23px;background:#e2f5fc"></div><div class="a" style="left:0;top:23px;width:4px;height:12px;background:#c6d3d8"></div><div class="a" style="left:4px;top:0;width:24px;height:11px;background:#e2f5fc"></div><div class="a" style="left:4px;top:1.5px;width:24px;height:20px;background:#c8d2d6;border-top-left-radius:12px 10px"></div><div class="a" style="left:16px;top:1.3px;width:12px;height:9.7px;background:#3f4244"></div><div class="a" style="left:4px;top:11px;width:12px;height:12px;background:#34373b"></div><div class="a" style="left:16px;top:11px;width:12px;height:12px;background:#101a4f"></div><div class="a" style="left:28px;top:11px;width:12px;height:12px;background:#0e1a38"></div><div class="a" style="left:40px;top:11px;width:12px;height:12px;background:#3a3a3a"></div><div class="a" style="left:52px;top:11px;width:12px;height:12px;background:#3c3c3c"></div><div class="a" style="left:64px;top:11px;width:12px;height:12px;background:#4f4f4f"></div><div class="a" style="left:76px;top:11px;width:12px;height:12px;background:#3a3a3a"></div><div class="a" style="left:88px;top:11px;width:12px;height:12px;background:#383838"></div><div class="a" style="left:100px;top:11px;width:12px;height:12px;background:#353535"></div><div class="a" style="left:112px;top:11px;width:12px;height:12px;background:#484848"></div><div class="a" style="left:124px;top:11px;width:12px;height:12px;background:#222222"></div><div class="a" style="left:4px;top:23px;width:12px;height:12px;background:#13151a"></div><div class="a" style="left:16px;top:23px;width:12px;height:12px;background:#101838"></div><div class="a" style="left:28px;top:23px;width:12px;height:12px;background:#15202e"></div><div class="a" style="left:40px;top:23px;width:12px;height:12px;background:#444444"></div><div class="a" style="left:52px;top:23px;width:12px;height:12px;background:#505050"></div><div class="a" style="left:64px;top:23px;width:12px;height:12px;background:#5a5a5a"></div><div class="a" style="left:76px;top:23px;width:12px;height:12px;background:#444444"></div><div class="a" style="left:88px;top:23px;width:12px;height:12px;background:#414141"></div><div class="a" style="left:100px;top:23px;width:12px;height:12px;background:#3e3e3e"></div><div class="a" style="left:112px;top:23px;width:12px;height:12px;background:#444444"></div><div class="a" style="left:124px;top:23px;width:12px;height:12px;background:#3a3a3a"></div><div class="a" style="left:16px;top:35px;width:12px;height:12px;background:#10131c"></div><div class="a" style="left:28px;top:35px;width:12px;height:12px;background:#121418"></div></body></html>
